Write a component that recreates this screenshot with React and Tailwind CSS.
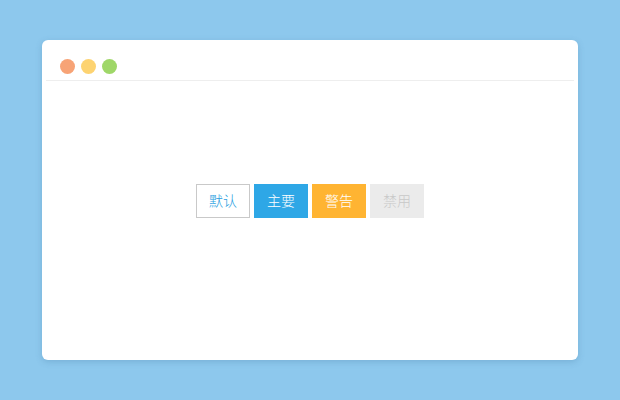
import React from "react";

function Dot({ color }) {
  return <span className={`block h-[15px] w-[15px] rounded-full ${color}`} />;
}

export default function App() {
  return (
    <div className="flex h-screen w-full items-center justify-center bg-[#8dc8ed] font-['Noto_Sans_CJK_SC',sans-serif]">
      <div className="flex h-[320px] w-[536px] flex-col rounded-[6px] bg-white shadow-[0_2px_6px_rgba(60,110,150,0.25)]">
        {/* Title bar */}
        <div className="flex h-10 gap-[6px] px-[18px] pt-[19px]">
          <Dot color="bg-[#f7a376]" />
          <Dot color="bg-[#fdd371]" />
          <Dot color="bg-[#9fd768]" />
        </div>
        <div className="mx-1 h-px bg-[#eeeeee]" />

        {/* Buttons */}
        <div className="flex flex-1 items-center justify-center gap-1 pb-10">
          <button className="h-[34px] w-[54px] border border-[#c9c9c9] bg-white text-[14px] font-light text-[#1e9de0]">
            默认
          </button>
          <button className="h-[34px] w-[54px] bg-[#2ea7e6] text-[14px] font-light text-white">
            主要
          </button>
          <button className="h-[34px] w-[54px] bg-[#ffb432] text-[14px] font-light text-white">
            警告
          </button>
          <button
            disabled
            className="h-[34px] w-[54px] bg-[#ebebeb] text-[14px] font-light text-[#c8c8c8]"
          >
            禁用
          </button>
        </div>
      </div>
    </div>
  );
}
